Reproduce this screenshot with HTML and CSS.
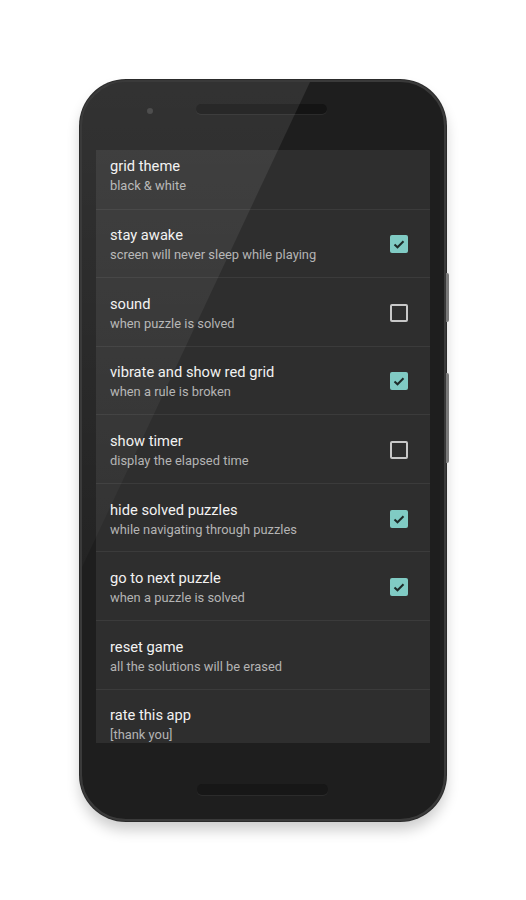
FILE: index.html
```html
<!DOCTYPE html>
<html>
<head>
<meta charset="utf-8">
<link rel="stylesheet" href="styles.css">
</head>
<body>
<div class="page">
  <div class="phone">
    <div class="btn btn-power"></div>
    <div class="btn btn-volume"></div>
    <div class="top-bezel">
      <span class="camera"></span>
      <span class="speaker"></span>
    </div>
    <div class="screen">
      <ul class="list">
        <li class="row"><div class="text"><div class="title">grid theme</div><div class="sub">black &amp; white</div></div></li>
        <li class="row"><div class="text"><div class="title">stay awake</div><div class="sub">screen will never sleep while playing</div></div><span class="check on"><svg viewBox="0 0 18 18" width="18" height="18"><path d="M4.5 9.5l3 2.8 6-6" fill="none" stroke="#1d2b29" stroke-width="2"/></svg></span></li>
        <li class="row"><div class="text"><div class="title">sound</div><div class="sub">when puzzle is solved</div></div><span class="check off"></span></li>
        <li class="row"><div class="text"><div class="title">vibrate and show red grid</div><div class="sub">when a rule is broken</div></div><span class="check on"><svg viewBox="0 0 18 18" width="18" height="18"><path d="M4.5 9.5l3 2.8 6-6" fill="none" stroke="#1d2b29" stroke-width="2"/></svg></span></li>
        <li class="row"><div class="text"><div class="title">show timer</div><div class="sub">display the elapsed time</div></div><span class="check off"></span></li>
        <li class="row"><div class="text"><div class="title">hide solved puzzles</div><div class="sub">while navigating through puzzles</div></div><span class="check on"><svg viewBox="0 0 18 18" width="18" height="18"><path d="M4.5 9.5l3 2.8 6-6" fill="none" stroke="#1d2b29" stroke-width="2"/></svg></span></li>
        <li class="row"><div class="text"><div class="title">go to next puzzle</div><div class="sub">when a puzzle is solved</div></div><span class="check on"><svg viewBox="0 0 18 18" width="18" height="18"><path d="M4.5 9.5l3 2.8 6-6" fill="none" stroke="#1d2b29" stroke-width="2"/></svg></span></li>
        <li class="row"><div class="text"><div class="title">reset game</div><div class="sub">all the solutions will be erased</div></div></li>
        <li class="row"><div class="text"><div class="title">rate this app</div><div class="sub">[thank you]</div></div></li>
      </ul>
    </div>
    <div class="bottom-bezel">
      <span class="speaker bottom"></span>
    </div>
    <div class="glare"></div>
  </div>
</div>
</body>
</html>
```

FILE: styles.css
```css
* { box-sizing: border-box; }
html, body { margin: 0; padding: 0; background: #ffffff; }
body { font-family: Roboto, "Noto Sans", sans-serif; }

.page {
  width: 526px;
  height: 900px;
  display: flex;
  justify-content: center;
  padding-top: 80px;
}

.phone {
  position: relative;
  width: 366px;
  height: 741px;
  background: #1e1e1e;
  border-radius: 46px;
  border: 2px solid #3a3a3a;
  box-shadow: 0 0 0 1px #2a2a2a, 0 9px 14px rgba(0,0,0,0.2);
  padding: 0 13px 0 14px;
  display: flex;
  flex-direction: column;
}

.top-bezel {
  height: 68px;
  position: relative;
}
.camera {
  position: absolute;
  left: 51px;
  top: 26px;
  width: 6px;
  height: 6px;
  border-radius: 50%;
  background: #3d3d3d;
}
.speaker {
  position: absolute;
  left: 100px;
  top: 22px;
  width: 131px;
  height: 10px;
  border-radius: 5px;
  background: #141414;
  box-shadow: 0 1px 0 rgba(255,255,255,0.06);
}

.screen {
  width: 334px;
  height: 593px;
  background: #2e2e2e;
  overflow: hidden;
}

.list {
  list-style: none;
  margin: -10px 0 0 0;
  padding: 0;
}
.row {
  height: 68.57px;
  border-top: 1px solid #3b3b3b;
  display: flex;
  align-items: center;
  padding: 0 22px 0 14px;
  justify-content: space-between;
}
.row:first-child { border-top: none; }
.text {
  padding-top: 4px;
}
.title {
  color: #f2f2f2;
  font-size: 14.7px;
  line-height: 19px;
}
.sub {
  color: #b4b4b4;
  font-size: 12.9px;
  line-height: 19px;
}
.check {
  width: 18px;
  height: 18px;
  border-radius: 2px;
  flex: none;
  margin-top: 2px;
}
.check svg { display: block; }
.check.on { background: #80cbc4; }
.check.off { border: 2px solid #c8c8c8; }

.bottom-bezel {
  flex: 1;
  position: relative;
}
.speaker.bottom {
  left: 101px;
  top: 41px;
  height: 11px;
  background: #171717;
}

.btn {
  position: absolute;
  right: -5px;
  width: 3px;
  background: #7a7a7a;
  border-radius: 0 2px 2px 0;
}
.btn-power { top: 191px; height: 49px; }
.btn-volume { top: 291px; height: 90px; }

.glare {
  position: absolute;
  inset: 0;
  border-radius: 44px;
  pointer-events: none;
  background: linear-gradient(to bottom, rgba(255,255,255,0.09), rgba(255,255,255,0.02) 70%);
  clip-path: polygon(0 0, 228px 0, 0 485px);
}
```
